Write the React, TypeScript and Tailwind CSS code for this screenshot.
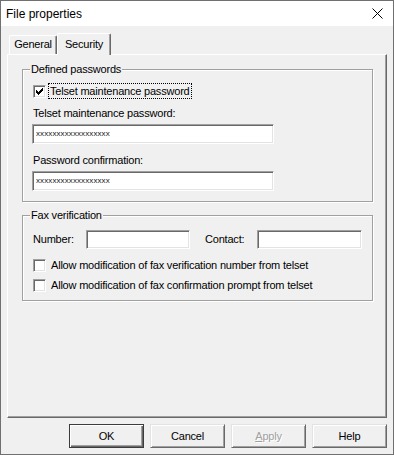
import React from "react";

const sunken =
  "bg-white border border-t-[#a0a0a0] border-l-[#a0a0a0] border-b-white border-r-white shadow-[inset_1px_1px_0_#696969,inset_-1px_-1px_0_#e3e3e3]";

function Checkbox({ checked }: { checked?: boolean }) {
  return (
    <span className={`w-[13px] h-[13px] flex items-center justify-center shrink-0 ${sunken}`}>
      {checked && (
        <svg width="7" height="7" viewBox="0 0 7 7" shapeRendering="crispEdges">
          <path
            d="M0 2h1v1h1v1h1v-1h1v-1h1v-1h1v-1h1v3h-1v1h-1v1h-1v1h-1v1h-1v-1h-1v-1h-1v-1h-1z"
            fill="#000"
          />
        </svg>
      )}
    </span>
  );
}

function Group({ label, className, children }: { label: string; className?: string; children: React.ReactNode }) {
  return (
    <div
      className={`relative border border-[#a0a0a0] shadow-[inset_1px_1px_0_#fff,1px_1px_0_#fff] ${className ?? ""}`}
    >
      <span className="absolute -top-[7px] left-[7px] px-[1px] leading-[13px] bg-[#f0f0f0]">{label}</span>
      {children}
    </div>
  );
}

function Btn({ children, def, disabled }: { children: React.ReactNode; def?: boolean; disabled?: boolean }) {
  const base = def
    ? "border border-[#3c3c3c] shadow-[inset_1px_1px_0_#fff,inset_-1px_-1px_0_#696969,inset_-2px_-2px_0_#a0a0a0]"
    : "border border-t-[#e3e3e3] border-l-[#e3e3e3] border-b-[#696969] border-r-[#696969] shadow-[inset_1px_1px_0_#fff,inset_-1px_-1px_0_#a0a0a0]";
  return (
    <div
      className={`w-[75px] h-[24px] flex items-center justify-center bg-[#f0f0f0] ${base} ${
        disabled ? "text-[#a0a0a0] [text-shadow:1px_1px_0_#fff]" : "text-black"
      }`}
    >
      {children}
    </div>
  );
}

export default function App() {
  return (
    <div className="w-[394px] h-[455px] bg-[#f0f0f0] border border-[#707070] flex flex-col font-['Liberation_Sans',Arial,sans-serif] text-[11px] tracking-[-0.2px] text-black leading-[13px] overflow-hidden">
      {/* title bar */}
      <div className="h-[25px] bg-white flex items-center justify-between pl-[5px] pr-[10px] shrink-0">
        <span className="text-[12px] tracking-normal leading-[16px]">File properties</span>
        <svg width="11" height="11" viewBox="0 0 11 11">
          <path d="M0.5 0.5 L10.5 10.5 M10.5 0.5 L0.5 10.5" stroke="#000" strokeWidth="1" />
        </svg>
      </div>

      <div className="flex flex-col px-[6px] pt-[7px]">
        {/* tabs */}
        <div className="h-[21px] flex items-end pl-[2px]">
          <div className="w-[48px] h-[19px] flex items-center justify-center pb-[1px] border-t border-l border-t-white border-l-white border-r border-r-[#696969] rounded-tl-[2px] rounded-tr-[2px] shadow-[inset_-1px_0_0_#a0a0a0]">
            General
          </div>
          <div className="relative z-10 -mb-px w-[54px] h-[22px] flex items-start justify-center pt-[4px] bg-[#f0f0f0] border-t border-l border-t-white border-l-white border-r border-r-[#696969] rounded-tl-[2px] rounded-tr-[2px] shadow-[inset_-1px_0_0_#a0a0a0]">
            Security
          </div>
        </div>

        {/* panel */}
        <div className="h-[364px] border border-t-white border-l-white border-b-[#696969] border-r-[#696969] shadow-[inset_-1px_-1px_0_#a0a0a0] pt-[14px] pl-[14px] pr-[13px]">
          <Group label="Defined passwords" className="pt-[13px] pb-[10px] pl-[9px]">
            <div className="h-[16px] flex items-center pl-[1px]">
              <Checkbox checked />
              <span className="ml-[2px] border border-dotted border-black px-[1px] leading-[14px]">
                Telset maintenance password
              </span>
            </div>
            <div className="mt-[8px] pl-[1px]">Telset maintenance password:</div>
            <div className={`mt-[4px] w-[242px] h-[20px] flex items-center pl-[3px] ${sunken}`}>
              <span className="text-[8px] tracking-[0.1px] leading-[8px] text-[#202020]">xxxxxxxxxxxxxxxxxx</span>
            </div>
            <div className="mt-[10px] pl-[1px]">Password confirmation:</div>
            <div className={`mt-[4px] w-[242px] h-[20px] flex items-center pl-[3px] ${sunken}`}>
              <span className="text-[8px] tracking-[0.1px] leading-[8px] text-[#202020]">xxxxxxxxxxxxxxxxxx</span>
            </div>
          </Group>

          <Group label="Fax verification" className="mt-[13px] pt-[14px] pb-[8px] pl-[10px]">
            <div className="flex items-center h-[19px]">
              <span className="w-[53px]">Number:</span>
              <div className={`w-[104px] h-[19px] ${sunken}`} />
              <span className="ml-[15px] w-[52px]">Contact:</span>
              <div className={`w-[105px] h-[19px] ${sunken}`} />
            </div>
            <div className="mt-[10px] h-[13px] flex items-center">
              <Checkbox />
              <span className="ml-[3px] border border-transparent px-[1px]">
                Allow modification of fax verification number from telset
              </span>
            </div>
            <div className="mt-[7px] h-[13px] flex items-center">
              <Checkbox />
              <span className="ml-[3px] border border-transparent px-[1px]">
                Allow modification of fax confirmation prompt from telset
              </span>
            </div>
          </Group>
        </div>

        {/* buttons */}
        <div className="mt-[6px] flex justify-end gap-[6px]">
          <Btn def>OK</Btn>
          <Btn>Cancel</Btn>
          <Btn disabled>
            <span>
              <span className="underline">A</span>pply
            </span>
          </Btn>
          <Btn>Help</Btn>
        </div>
      </div>
    </div>
  );
}
